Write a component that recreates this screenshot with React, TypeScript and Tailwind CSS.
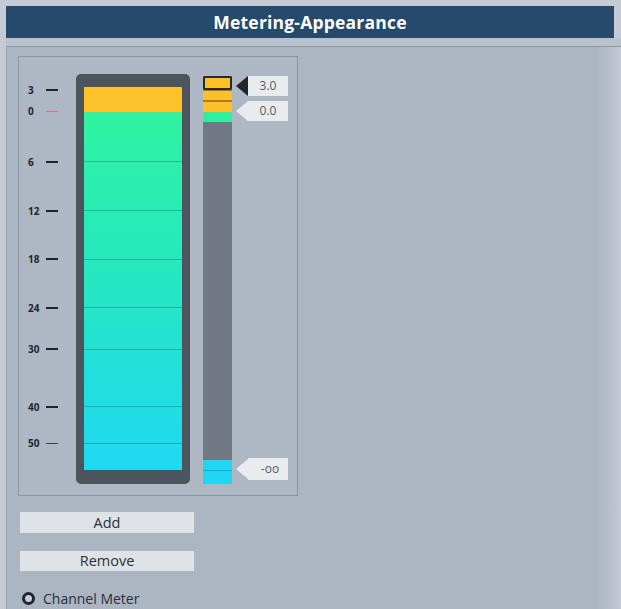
import React from "react";

const font = { fontFamily: '"Open Sans", "Noto Sans", sans-serif' };

const ticks: { label: string; y: number; red?: boolean; faint?: boolean }[] = [
  { label: "3", y: 33 },
  { label: "0", y: 54, red: true },
  { label: "6", y: 105 },
  { label: "12", y: 154 },
  { label: "18", y: 202 },
  { label: "24", y: 251 },
  { label: "30", y: 292 },
  { label: "40", y: 350 },
  { label: "50", y: 386, faint: true },
];

const segs = [49, 49, 49, 48, 42, 57, 37, 27];

function Pointer({ dark }: { dark?: boolean }) {
  return (
    <svg width="12" height="20" viewBox="0 0 12 20" className="shrink-0">
      <polygon points="0,10 12,0 12,20" fill={dark ? "#22262b" : "#e9ecef"} />
    </svg>
  );
}

export default function App() {
  return (
    <div
      className="w-[621px] h-[609px] overflow-hidden bg-[#c4cbd5] flex flex-col pt-[6px] pl-[6px]"
      style={font}
    >
      <div className="h-[32px] shrink-0 mr-[7px] bg-[#264a6b] flex items-center justify-center text-white font-bold text-[17.5px] tracking-[0.2px]">
        Metering-Appearance
      </div>
      <div className="h-[9px] shrink-0 bg-[#bac2cd] border-b border-[#8f98a5]" />
      <div className="flex-1 min-h-0 overflow-hidden border-l border-[#9aa3b0] flex flex-col pl-[11px] pt-[9px] bg-gradient-to-r from-[#acb5c2] from-[96%] to-[#c2c9d3]">
        {/* group box */}
        <div className="w-[280px] h-[440px] shrink-0 border border-[#8d96a3] bg-[#aeb7c4] flex items-start">
          {/* scale */}
          <div className="relative w-[57px] h-full shrink-0">
            {ticks.map((t) => (
              <div
                key={t.label}
                className="absolute left-[9px] flex items-center"
                style={{ top: t.y - 6 }}
              >
                <span className="w-[18px] text-[10px] font-bold text-[#1f2630] leading-[12px]">
                  {t.label}
                </span>
                <span
                  className={
                    t.red
                      ? "w-[12px] h-px bg-[#e0707a]"
                      : t.faint
                      ? "w-[12px] h-px bg-[#3a4048]"
                      : "w-[12px] h-[2px] bg-[#1f242b]"
                  }
                />
              </div>
            ))}
          </div>
          {/* big meter */}
          <div className="mt-[17px] w-[114px] h-[410px] rounded-[5px] bg-[#4c545e] pt-[13px] pb-[14px] px-[8px] shrink-0">
            <div className="h-full flex flex-col">
              <div className="h-[25px] bg-[#fcc22a]" />
              <div className="flex-1 flex flex-col bg-gradient-to-b from-[#2ff39f] via-[#26e6c4] to-[#20d8f3]">
                {segs.map((h, i) => (
                  <div
                    key={i}
                    className={i === 0 ? "" : "border-t border-[#1d9f8f]/70"}
                    style={{ height: h }}
                  />
                ))}
              </div>
            </div>
          </div>
          {/* small meter */}
          <div className="mt-[19px] ml-[13px] w-[29px] h-[408px] bg-[#6f7883] rounded-b-[3px] flex flex-col shrink-0 overflow-hidden">
            <div className="h-[14px] bg-[#fbc02a] border-2 border-[#2d2a22] rounded-[2px]" />
            <div className="h-px bg-[#8b7a4a]" />
            <div className="h-[9px] bg-[#fbc02a]" />
            <div className="h-[2px] bg-[#b07a2a]" />
            <div className="h-[10px] bg-[#fbc02a]" />
            <div className="h-[10px] bg-[#2ff0a2]" />
            <div className="flex-1" />
            <div className="h-[11px] bg-[#20d6f2] border-b border-[#1aa8c0]" />
            <div className="h-[13px] bg-[#20d6f2]" />
          </div>
          {/* value labels */}
          <div className="relative ml-[4px] w-[52px] h-full shrink-0">
            <div className="absolute left-0 top-[19px] flex items-center">
              <Pointer dark />
              <div className="w-[40px] h-[20px] bg-[#e9ecef] text-[12px] text-[#555b63] flex items-center justify-center">
                3.0
              </div>
            </div>
            <div className="absolute left-0 top-[44px] flex items-center">
              <Pointer />
              <div className="w-[40px] h-[20px] bg-[#e9ecef] text-[12px] text-[#555b63] flex items-center justify-center">
                0.0
              </div>
            </div>
            <div className="absolute left-0 top-[401px] flex items-center">
              <Pointer />
              <div className="w-[40px] h-[22px] bg-[#e9ecef] text-[12px] text-[#555b63] flex items-center justify-center pl-[4px]">
                -oo
              </div>
            </div>
          </div>
        </div>
        {/* buttons */}
        <div className="mt-[16px] ml-[2px] w-[174px] h-[21px] shrink-0 bg-[#dfe3e8] flex items-center justify-center text-[14.5px] text-[#2c3036]">
          Add
        </div>
        <div className="mt-[18px] ml-[2px] w-[174px] h-[20px] shrink-0 bg-[#dfe3e8] flex items-center justify-center text-[14.5px] text-[#2c3036]">
          Remove
        </div>
        <div className="mt-[17px] ml-[4px] flex items-center gap-[8px] shrink-0">
          <span className="w-[13px] h-[13px] rounded-full border-[3px] border-[#1e252e] bg-[#c9ced6]" />
          <span className="text-[14px] text-[#24303d]">Channel Meter</span>
        </div>
      </div>
    </div>
  );
}
